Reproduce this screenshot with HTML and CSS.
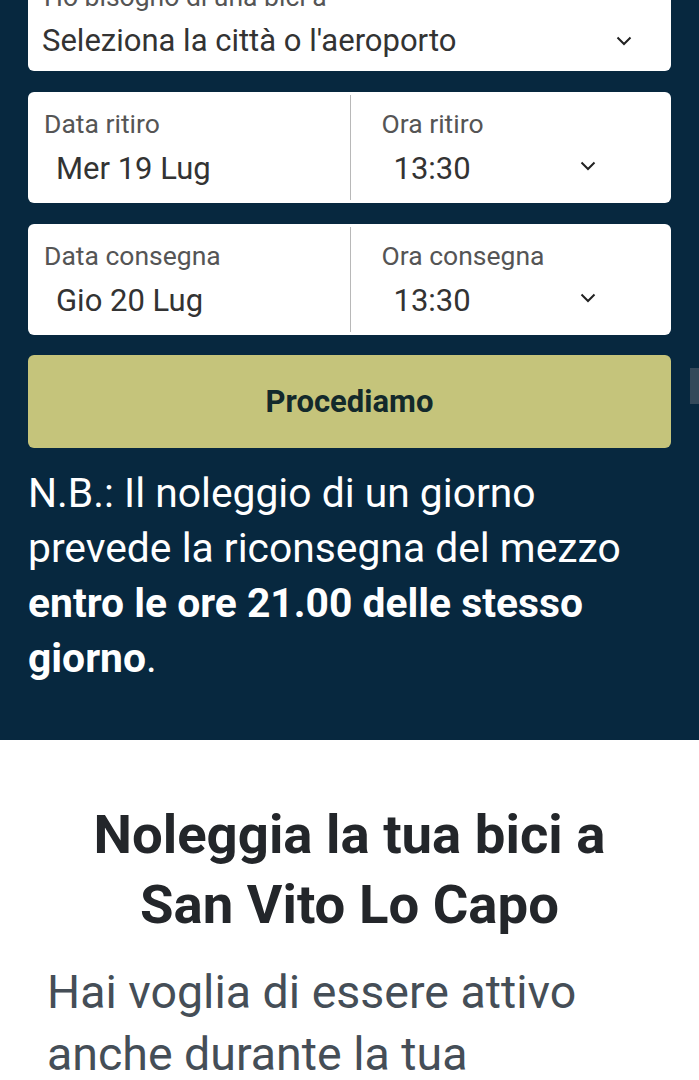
FILE: index.html
```html
<!DOCTYPE html>
<html lang="it">
<head>
<meta charset="utf-8">
<title>Noleggio bici</title>
<link rel="stylesheet" href="styles.css">
</head>
<body>
<section class="hero">
  <div class="card select-card">
    <div class="field">
      <span class="label">Ho bisogno di una bici a</span>
      <span class="value">Seleziona la città o l'aeroporto</span>
    </div>
    <svg class="chev" viewBox="0 0 16 10" width="16" height="10"><path d="M1.5 1.5 L8 8 L14.5 1.5" fill="none" stroke="#222" stroke-width="2"/></svg>
  </div>
  <div class="card split">
    <div class="field half">
      <span class="label">Data ritiro</span>
      <span class="value indent">Mer 19 Lug</span>
    </div>
    <div class="field half right">
      <span class="label">Ora ritiro</span>
      <span class="value indent">13:30</span>
      <svg class="chev" viewBox="0 0 16 10" width="16" height="10"><path d="M1.5 1.5 L8 8 L14.5 1.5" fill="none" stroke="#222" stroke-width="2"/></svg>
    </div>
  </div>
  <div class="card split">
    <div class="field half">
      <span class="label">Data consegna</span>
      <span class="value indent">Gio 20 Lug</span>
    </div>
    <div class="field half right">
      <span class="label">Ora consegna</span>
      <span class="value indent">13:30</span>
      <svg class="chev" viewBox="0 0 16 10" width="16" height="10"><path d="M1.5 1.5 L8 8 L14.5 1.5" fill="none" stroke="#222" stroke-width="2"/></svg>
    </div>
  </div>
  <button class="btn">Procediamo</button>
  <p class="note">N.B.: Il noleggio di un giorno prevede la riconsegna del mezzo <strong>entro le ore 21.00 delle stesso giorno</strong>.</p>
  <div class="scroll-tab"></div>
</section>
<section class="intro">
  <h1>Noleggia la tua bici a San Vito Lo Capo</h1>
  <p>Hai voglia di essere attivo anche durante la tua</p>
</section>
</body>
</html>
```
FILE: styles.css
```css
html, body {
  margin: 0;
  padding: 0;
  background: #ffffff;
  font-family: Roboto, "Noto Sans", sans-serif;
}
.hero {
  position: relative;
  background: #07283f;
  padding: 0 28px 54px;
  display: flex;
  flex-direction: column;
}
.card {
  background: #ffffff;
  border-radius: 6px;
  color: #333;
}
.select-card {
  display: flex;
  margin-top: -40px;
  height: 111px;
  align-items: flex-start;
  padding: 0 16px;
}
.select-card .field {
  flex: 1;
}
.select-card .label {
  margin-top: 19px;
}
.select-card .value {
  font-size: 31px;
  margin-top: 6px;
  margin-left: -2px;
}
.select-card .chev {
  margin-top: 76px;
  margin-right: 23px;
}
.split {
  display: grid;
  grid-template-columns: 1fr 1fr;
  margin-top: 21px;
  height: 111px;
}
.field {
  display: flex;
  flex-direction: column;
  position: relative;
  min-width: 0;
}
.half {
  padding: 14px 16px 0;
}
.right {
  border-left: 1px solid #b8b8b8;
  margin: 3px 0;
  padding: 11px 16px 0 31px;
}
.label {
  font-size: 26.5px;
  color: #555;
  line-height: 36px;
}
.value {
  font-size: 31px;
  color: #333;
  line-height: 40px;
  margin-top: 7px;
}
.indent {
  margin-left: 12px;
}
.right .chev {
  position: absolute;
  right: 75px;
  top: 66px;
}
.btn {
  margin-top: 20px;
  height: 93px;
  border: none;
  border-radius: 6px;
  background: #c5c47b;
  color: #13292b;
  font-family: Roboto, sans-serif;
  font-weight: 700;
  font-size: 31px;
}
.note {
  margin: 18px 0 0;
  color: #ffffff;
  font-size: 40.8px;
  line-height: 55px;
}
.note strong {
  font-weight: 700;
}
.scroll-tab {
  position: absolute;
  right: 0;
  top: 368px;
  width: 9px;
  height: 36px;
  background: #34495a;
}
.intro {
  padding: 59px 47px 0;
  color: #222;
}
.intro h1 {
  margin: 0 30px;
  text-align: center;
  font-size: 54.5px;
  line-height: 70px;
  font-weight: 700;
  color: #23262a;
}
.intro p {
  margin: 22px 0 0;
  font-size: 46.5px;
  line-height: 62px;
  color: #454e57;
}
```
